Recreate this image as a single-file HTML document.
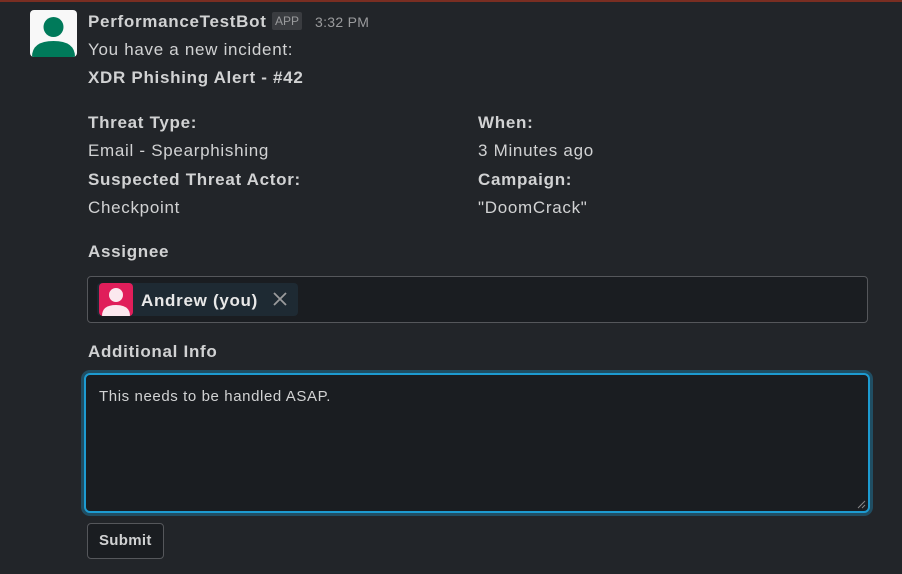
<!DOCTYPE html>
<html><head><meta charset="utf-8"><style>
html,body{margin:0;padding:0;}
body{width:902px;height:574px;background:#222529;font-family:"Liberation Sans",sans-serif;color:#d1d2d3;position:relative;overflow:hidden;}
.a{position:absolute;white-space:nowrap;}
.b{font-weight:bold;color:#d1d2d3;}
.t{font-size:17px;letter-spacing:0.7px;}
</style></head><body>
<div class="a" style="left:0;top:0;width:902px;height:2px;background:#7a2e22;"></div>
<div class="a" style="left:30px;top:10px;width:47px;height:47px;background:#f8f8f8;border-radius:4px;overflow:hidden;">
<svg width="47" height="47" viewBox="0 0 47 47"><circle cx="23.5" cy="17" r="10" fill="#007a5a"/><path d="M2 47 Q2 31 23.5 31 Q45 31 45 47Z" fill="#007a5a"/></svg>
</div>
<div class="a b t" style="left:88px;top:12px;">PerformanceTestBot</div>
<div class="a" style="left:272px;top:12px;background:#3a3c40;color:#9a9b9d;font-size:12px;padding:2px 3px;border-radius:2px;">APP</div>
<div class="a" style="left:315px;top:14px;font-size:14px;color:#9a9b9d;letter-spacing:0.3px;">3:32 PM</div>
<div class="a t" style="left:88px;top:40px;">You have a new incident:</div>
<div class="a b t" style="left:88px;top:68px;">XDR Phishing Alert - #42</div>
<div class="a b t" style="left:88px;top:113px;">Threat Type:</div>
<div class="a t" style="left:88px;top:141px;">Email - Spearphishing</div>
<div class="a b t" style="left:88px;top:170px;">Suspected Threat Actor:</div>
<div class="a t" style="left:88px;top:198px;">Checkpoint</div>
<div class="a b t" style="left:478px;top:113px;">When:</div>
<div class="a t" style="left:478px;top:141px;">3 Minutes ago</div>
<div class="a b t" style="left:478px;top:170px;">Campaign:</div>
<div class="a t" style="left:478px;top:198px;">"DoomCrack"</div>
<div class="a b t" style="left:88px;top:242px;">Assignee</div>
<div class="a" style="left:87px;top:276px;width:779px;height:45px;border:1px solid #55575b;border-radius:4px;background:#1a1d21;"></div>
<div class="a" style="left:97px;top:283px;width:201px;height:33px;background:#1e2a33;border-radius:4px;"></div>
<div class="a" style="left:99px;top:283px;width:34px;height:33px;background:#e01e5a;border-radius:4px;overflow:hidden;">
<svg width="34" height="33" viewBox="0 0 34 33"><circle cx="17" cy="12" r="7" fill="#fbe8ee"/><path d="M3 33 Q3 22 17 22 Q31 22 31 33Z" fill="#fbe8ee"/></svg>
</div>
<div class="a b t" style="left:141px;top:291px;color:#e8e8e8;">Andrew (you)</div>
<svg class="a" style="left:272px;top:291px;" width="16" height="16" viewBox="0 0 16 16"><path d="M2 2L14 14M14 2L2 14" stroke="#9a9b9d" stroke-width="1.8"/></svg>
<div class="a b t" style="left:88px;top:342px;">Additional Info</div>
<div class="a" style="left:84px;top:373px;width:782px;height:136px;border:2px solid #1d9bd1;border-radius:6px;background:#1a1d21;box-shadow:0 0 0 3px rgba(29,155,209,0.35);"></div>
<div class="a" style="left:99px;top:388px;font-size:15px;color:#d1d2d3;letter-spacing:0.6px;">This needs to be handled ASAP.</div>
<svg class="a" style="left:857px;top:500px;" width="9" height="9" viewBox="0 0 9 9"><path d="M1 8L8 1M5 8L8 5" stroke="#888" stroke-width="1"/></svg>
<div class="a" style="left:87px;top:523px;width:77px;height:36px;border:1px solid #55575b;border-radius:4px;background:#1a1d21;box-sizing:border-box;"></div>
<div class="a b" style="left:99px;top:532px;font-size:15px;color:#d1d2d3;letter-spacing:0.3px;">Submit</div>
</body></html>
